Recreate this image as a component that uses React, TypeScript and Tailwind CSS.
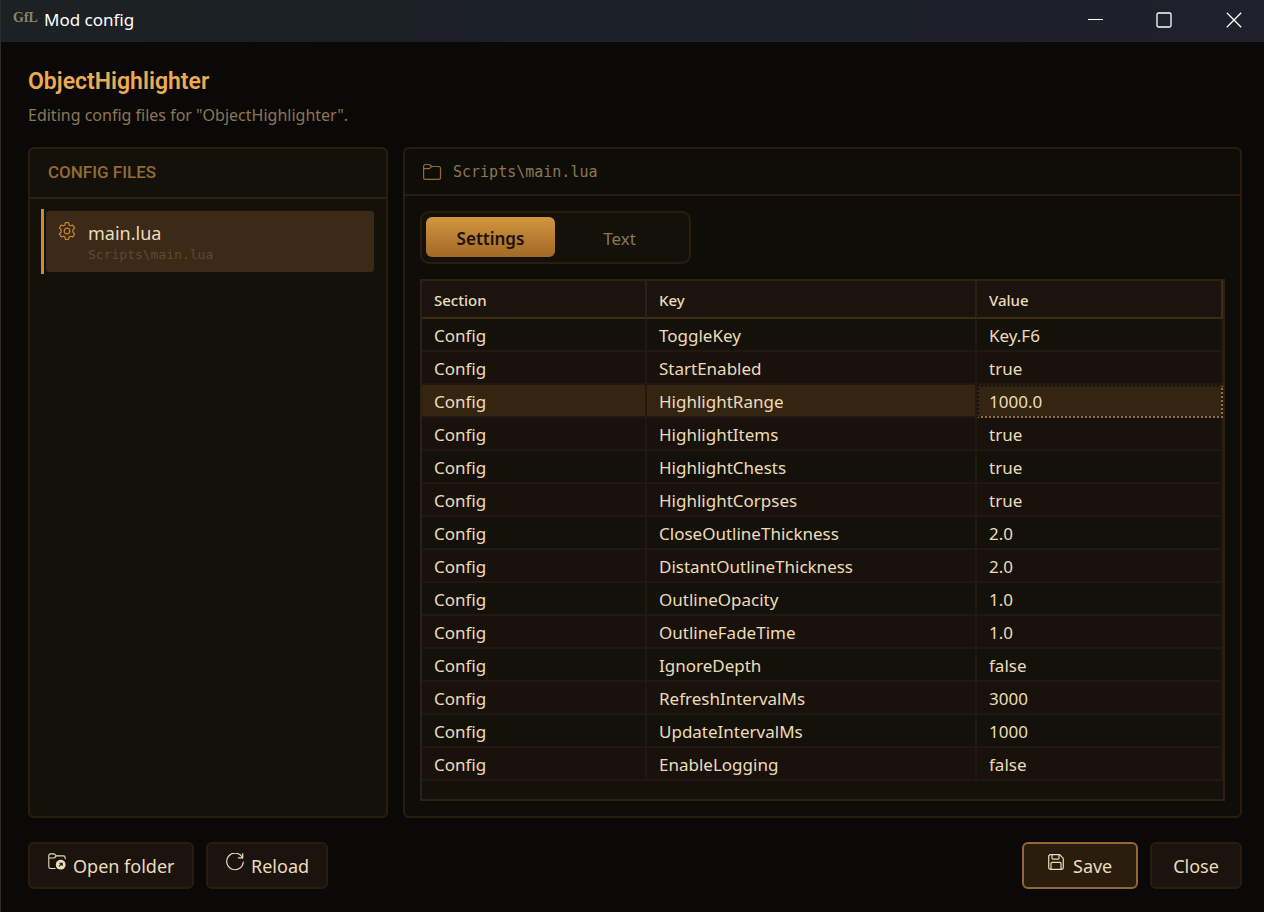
import { useState } from "react";

const rows: [string, string, string][] = [
  ["Config", "ToggleKey", "Key.F6"],
  ["Config", "StartEnabled", "true"],
  ["Config", "HighlightRange", "1000.0"],
  ["Config", "HighlightItems", "true"],
  ["Config", "HighlightChests", "true"],
  ["Config", "HighlightCorpses", "true"],
  ["Config", "CloseOutlineThickness", "2.0"],
  ["Config", "DistantOutlineThickness", "2.0"],
  ["Config", "OutlineOpacity", "1.0"],
  ["Config", "OutlineFadeTime", "1.0"],
  ["Config", "IgnoreDepth", "false"],
  ["Config", "RefreshIntervalMs", "3000"],
  ["Config", "UpdateIntervalMs", "1000"],
  ["Config", "EnableLogging", "false"],
];

function GearIcon() {
  return (
    <svg className="size-[18px] shrink-0" viewBox="0 0 18 18" fill="none" stroke="currentColor" strokeWidth="1.2" strokeLinejoin="round" aria-hidden="true">
      <path d="M7.4.7h3.2l.6 2.400 1.300.7 2.300-.7 1.800 3-1.700 1.600v2.600l1.700 1.600-1.800 3-2.300-.7-1.300.7-.6 2.400H7.400l-.6-2.400-1.300-.7-2.300.7-1.800-3 1.700-1.600V7.700L1.400 6.100l1.800-3 2.300.7 1.300-.7z" />
      <circle cx="9" cy="9" r="2.800" />
    </svg>
  );
}

function FolderIcon() {
  return (
    <svg className="size-5 shrink-0" viewBox="0 0 20 20" fill="none" stroke="currentColor" strokeWidth="1.2" strokeLinejoin="round" aria-hidden="true">
      <path d="M1.600 15.500V4.500c0-1.200.8-2 2-2h3.200c.5 0 .9.200 1.200.5l1.500 1.500h7.100c1.100 0 1.900.8 1.900 1.900v9.100c0 1.100-.8 1.900-1.900 1.900H3.500c-1.100 0-1.900-.8-1.900-1.900z" />
      <path d="M1.600 6.600h5.200c.5 0 .9-.2 1.200-.5l1.500-1.500" />
    </svg>
  );
}

function OpenFolderIcon() {
  return (
    <svg className="size-[18px] shrink-0" viewBox="0 0 18 18" fill="none" stroke="currentColor" strokeWidth="1.1" strokeLinejoin="round" aria-hidden="true">
      <path d="M7.500 15.500H2.500c-1 0-1.700-.7-1.700-1.700V2.500C.8 1.600 1.500.9 2.500.9h3.200c.5 0 .8.200 1.100.5l1.500 1.500h7c1.100 0 1.900.8 1.900 1.900v1.400" />
      <path d="M.8 5h4.900c.5 0 .8-.2 1.100-.5l1.500-1.600" />
      <circle cx="12.700" cy="11.700" r="4.900" fill="currentColor" stroke="none" />
      <path d="M11 13.400l3.200-3.200M11.400 10.200h2.800V13" stroke="#1b130d" strokeWidth="1.100" />
    </svg>
  );
}

function ReloadIcon() {
  return (
    <svg className="size-[18px] shrink-0" viewBox="0 0 18 18" fill="none" stroke="currentColor" strokeWidth="1.200" strokeLinecap="round" aria-hidden="true">
      <path d="M16.400 4.600A8.300 8.300 0 1 0 17.300 9" />
      <path d="M16.700.7v4.100h-4.200" />
    </svg>
  );
}

function SaveIcon() {
  return (
    <svg className="size-4 shrink-0" viewBox="0 0 16 16" fill="none" stroke="currentColor" strokeWidth="1.200" strokeLinejoin="round" aria-hidden="true">
      <path d="M.7 2.500C.7 1.500 1.500.7 2.500.7h9.200l3.600 3.600v9.200c0 1-.8 1.800-1.800 1.800h-11c-1 0-1.800-.8-1.800-1.800z" />
      <path d="M4 .7v3.600c0 .5.3.8.8.8h5.400c.5 0 .8-.3.8-.8V.7M3 15.300V9.400c0-.6.400-1 1-1h8c.6 0 1 .4 1 1v5.900" />
    </svg>
  );
}

const plainButton =
  "flex h-[47px] items-center rounded-md border-2 border-[#2a1d10] bg-[#1b130d] pt-[2px] text-[18px] text-[#ecdcba]";

export default function App() {
  const [tab, setTab] = useState("Settings");
  return (
    <div className="flex min-h-screen flex-col border-l border-[#2c2c2b] bg-[#0a0907] font-['Noto_Sans',sans-serif] text-[#ecdcba]">
      <header className="flex h-[42px] shrink-0 items-center bg-linear-to-r from-[#1c2122] via-[#1c2028] to-[#1e202b] pb-[2px] text-white">
        <span className="ml-3 w-[22px] pb-1 font-['Liberation_Serif',serif] text-[14px] leading-4 font-bold text-[#8d8271]" aria-hidden="true">
          GfL
        </span>
        <h1 className="ml-[9px] flex-1 text-[17px]">Mod config</h1>
        <button aria-label="Minimize" className="flex h-full w-[68px] items-center justify-center">
          <svg className="size-4" viewBox="0 0 16 16" stroke="currentColor" aria-hidden="true"><path d="M0 7.500h15" /></svg>
        </button>
        <button aria-label="Maximize" className="flex h-full w-[68px] items-center justify-center">
          <svg className="size-4" viewBox="0 0 16 16" fill="none" stroke="currentColor" strokeWidth="1.300" aria-hidden="true"><rect x="1" y="1" width="14" height="14" rx="1.500" /></svg>
        </button>
        <button aria-label="Close window" className="flex h-full w-[66px] items-center justify-center pl-[6px]">
          <svg className="size-4" viewBox="0 0 16 16" stroke="currentColor" strokeWidth="1.300" aria-hidden="true"><path d="M.8.8l14.400 14.400M15.200.8L.8 15.200" /></svg>
        </button>
      </header>

      <main className="flex flex-1 flex-col pt-6 pr-[22px] pb-[23px] pl-[27px]">
        <h2 className="font-[Roboto,sans-serif] text-[23px] leading-8 font-semibold text-[#ebac50]">ObjectHighlighter</h2>
        <p className="pt-[5px] text-[16px] leading-6 text-[#8b7655]">Editing config files for "ObjectHighlighter".</p>

        <div className="mt-5 flex flex-1 gap-[15px]">
          <section className="flex w-[360px] shrink-0 flex-col rounded-md border-2 border-[#2a1d10] bg-[#14110b]">
            <h3 className="flex h-[50px] items-center border-b-2 border-[#2e2012] pl-[18px] font-[Roboto,sans-serif] text-[17px] font-medium text-[#926b36]">
              CONFIG FILES
            </h3>
            <div className="pt-[10px] pr-3 pl-[11px]">
              <button className="flex w-full border-l-[3px] border-[#cd8b36] py-[2px] pl-[2px] text-left">
                <span className="flex h-[61px] flex-1 gap-3 rounded-[3px] bg-[#3a2a17] pt-[10px] pl-3">
                  <span className="pt-px text-[#c58432]"><GearIcon /></span>
                  <span className="flex flex-col gap-[2px]">
                    <span className="text-[18px] leading-6">main.lua</span>
                    <span className="font-['DejaVu_Sans_Mono',monospace] text-[13px] leading-4 text-[#5f4a30]">Scripts\main.lua</span>
                  </span>
                </span>
              </button>
            </div>
          </section>

          <section className="flex min-w-0 flex-1 flex-col rounded-md border-2 border-[#2a1d10] bg-[#0f0d08]">
            <div className="flex h-[47px] items-center gap-[11px] border-b-2 border-[#2a1d10] pl-[17px] text-[#926b36]">
              <FolderIcon />
              <span className="pt-[2px] font-['DejaVu_Sans_Mono',monospace] text-[15px] text-[#8b7655]">Scripts\main.lua</span>
            </div>
            <div className="flex flex-1 flex-col p-[15px]">
              <div role="tablist" className="flex w-[271px] rounded-[9px] border-2 border-[#2a1d10] bg-[#14110b] p-1 pb-[5px]">
                {["Settings", "Text"].map((name) => (
                  <button
                    key={name}
                    role="tab"
                    aria-selected={tab === name}
                    onClick={() => setTab(name)}
                    className={
                      tab === name
                        ? "h-10 w-[129px] rounded-md bg-linear-to-b from-[#d39540] to-[#a16925] pt-1 text-[17px] font-semibold text-[#1b130d]"
                        : "h-10 w-[129px] rounded-md pt-1 text-[17px] text-[#8b7655]"
                    }
                  >
                    {name}
                  </button>
                ))}
              </div>

              <div className="mt-[15px] flex-1 border-2 border-[#2e2012] bg-[#14110b]">
                <table className="w-full table-fixed border-separate border-spacing-0 text-left">
                  <colgroup>
                    <col className="w-[225px]" />
                    <col className="w-[330px]" />
                    <col />
                  </colgroup>
                  <thead>
                    <tr className="bg-[#1b130d] text-[15px]">
                      {["Section", "Key", "Value"].map((h, j) => (
                        <th
                          key={h}
                          scope="col"
                          className={`h-[38px] border-r-2 border-b-2 border-b-[#412b14] px-3 pt-[2px] pb-0 font-medium ${j === 2 ? "border-r-[#412b14]" : "border-r-[#2e2012]"}`}
                        >
                          {h}
                        </th>
                      ))}
                    </tr>
                  </thead>
                  <tbody>
                    {rows.map((row, i) => (
                      <tr key={row[1]} className={i === 2 ? "bg-[#342412]" : i % 2 ? "bg-[#19110b]" : "bg-[#14110b]"}>
                        {row.map((cell, j) => (
                          <td key={j} className="relative h-[33px] border-r-2 border-b-2 border-[#22180f] px-3 pt-[2px] pb-0 text-[17px] leading-6">
                            {cell}
                            {i === 2 && j === 2 && (
                              <span className="absolute top-0 -right-[2px] -bottom-[2px] left-0 border-2 border-dotted border-t-[#15100a] border-r-[#95703a] border-b-[#95703a] border-l-[#15100a]" />
                            )}
                          </td>
                        ))}
                      </tr>
                    ))}
                  </tbody>
                </table>
              </div>
            </div>
          </section>
        </div>

        <footer className="mt-6 flex gap-3">
          <button className={`${plainButton} w-[166px] gap-[7px] pl-[18px]`}>
            <span className="pb-[10px]"><OpenFolderIcon /></span>Open folder
          </button>
          <button className={`${plainButton} w-[122px] gap-[7px] pl-[18px]`}>
            <span className="pb-[10px]"><ReloadIcon /></span>Reload
          </button>
          <button className="ml-auto flex h-[47px] w-[116px] items-center gap-[9px] rounded-md border-2 border-[#8f6836] bg-[#2a1d0e] pt-[2px] pl-6 text-[18px]">
            <span className="pb-[10px]"><SaveIcon /></span>Save
          </button>
          <button className={`${plainButton} w-[92px] justify-center`}>Close</button>
        </footer>
      </main>
    </div>
  );
}
